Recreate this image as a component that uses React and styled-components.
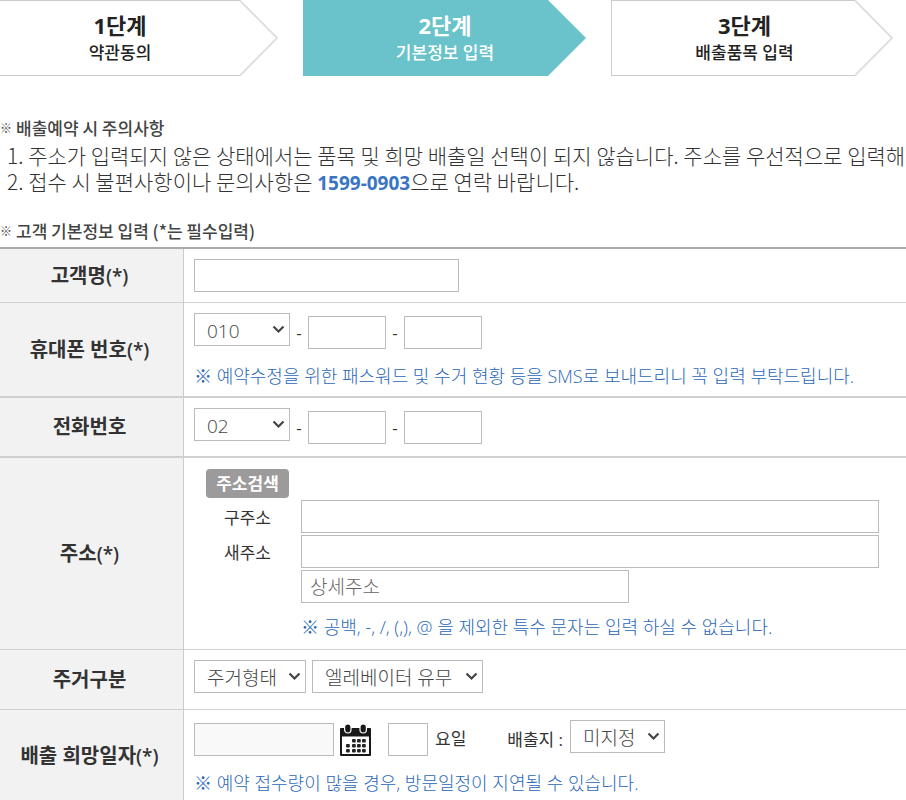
import React from "react";
import styled, { createGlobalStyle } from "styled-components";

const GlobalStyle = createGlobalStyle`
  *, *::before, *::after { box-sizing: border-box; }
  body {
    margin: 0;
    background: #fff;
    color: #333;
    font-family: "Open Sans", "Noto Sans CJK KR", sans-serif;
    font-size: 17px;
    line-height: 24px;
    overflow-x: hidden;
  }
  input, select, button { font-family: inherit; color: inherit; }
`;

const Page = styled.main`
  overflow: hidden;
`;

const Steps = styled.ol`
  display: grid;
  grid-template-columns: 278fr 283fr 282fr;
  gap: 25px;
  margin: 0;
  padding: 0 13px 0 0;
  list-style: none;
`;

const Step = styled.li`
  display: flex;
  height: 76px;
  color: ${(p) => (p.$active ? "#fff" : "#222")};
`;

const StepBody = styled.div`
  flex: 1;
  display: flex;
  flex-direction: column;
  align-items: center;
  justify-content: center;
  padding: 2px 0 0 ${(p) => p.$indent}px;
  white-space: nowrap;
  background: ${(p) => (p.$active ? "#6ac3ca" : "#fff")};
  border: 1px solid ${(p) => (p.$active ? "#6ac3ca" : "#ccc")};
  border-right: 0;
  ${(p) => p.$open && "border-left: 0;"}
`;

const StepTitle = styled.strong`
  font-size: 22px;
  line-height: 28px;
`;

const StepText = styled.span`
  font-size: 17px;
  font-weight: 500;
  line-height: 28px;
`;

const Tip = styled.svg`
  flex: none;
  display: block;
  width: 38px;
  height: 76px;
`;

const SectionTitle = styled.h2`
  display: flex;
  gap: 4px;
  margin: ${(p) => p.$top}px 0 0;
  font-family: "Noto Sans CJK KR", sans-serif;
  font-size: 17px;
  font-weight: 500;
  line-height: 24px;
  color: #444;
`;

const SmallMark = styled.span`
  font-size: 12px;
`;

const Notes = styled.ol`
  margin: 2px 0 0;
  padding: 0 0 0 7px;
  list-style: none;
  white-space: nowrap;
  font-family: "Noto Sans CJK KR", sans-serif;
  font-size: 21px;
  font-weight: 300;
  line-height: 26px;
  color: #333;
`;

const Phone = styled.strong`
  font-family: "Open Sans", sans-serif;
  font-size: 19px;
  font-weight: 700;
  line-height: 20px;
  color: #3a75c4;
`;

const Table = styled.table`
  width: 100%;
  margin-top: 4px;
  border-collapse: separate;
  border-spacing: 0;
  border-top: 2px solid #aaa;
`;

const Head = styled.th`
  width: 184px;
  padding: 0 4px 0 0;
  background: #f2f2f2;
  border-right: 1px solid #ccc;
  border-bottom: ${(p) => p.$line}px solid #d0d0d0;
  font-size: 20px;
  font-weight: 700;
  line-height: 28px;
  white-space: nowrap;
`;

const Mark = styled.span`
  font-size: 19px;
  font-weight: 600;
`;

const Cell = styled.td`
  padding: 10px 27px ${(p) => p.$bottom}px 10px;
  border-bottom: ${(p) => p.$line}px solid #d0d0d0;
  vertical-align: top;
`;

const Fields = styled.div`
  display: flex;
  align-items: flex-end;
  gap: 6px;
`;

const Input = styled.input`
  display: block;
  width: ${(p) => p.$width};
  height: 33px;
  padding: 0 8px;
  border: 1px solid #bbb;
  border-radius: 0;
  background: ${(p) => (p.readOnly ? "#f9f9f9" : "#fff")};
  font-size: 19px;
  font-weight: 300;
  &::placeholder { color: #666; opacity: 1; }
`;

const SelectBox = styled.span`
  position: relative;
  display: block;
  width: ${(p) => p.$width}px;
  margin-bottom: 3px;
  svg {
    position: absolute;
    right: 5px;
    top: 12px;
    width: 13px;
    height: 9px;
    pointer-events: none;
  }
`;

const Select = styled.select`
  display: block;
  width: 100%;
  height: 33px;
  padding: 2px 0 0 12px;
  border: 1px solid #bbb;
  border-radius: 0;
  background: #fff;
  appearance: none;
  font-size: 19px;
  font-weight: 300;
  color: #444;
`;

const Dash = styled.span`
  width: 6px;
  text-align: center;
  line-height: 33px;
`;

const Hint = styled.p`
  margin: 0;
  padding-top: ${(p) => p.$top}px;
  font-size: 18px;
  font-weight: 300;
  line-height: 24px;
  white-space: nowrap;
  color: #2a67b8;
`;

const Address = styled.div`
  display: grid;
  grid-template-columns: 83px 1fr;
  column-gap: 12px;
  padding: 1px 0 0 12px;
  label { text-align: center; line-height: 35px; }
`;

const SearchButton = styled.button`
  height: 29px;
  margin: 0 0 2px;
  padding: 0;
  border: 0;
  border-radius: 4px;
  background: #9c9a9a;
  color: #fff;
  font-size: 17px;
  font-weight: 700;
  line-height: 28px;
`;

const SecondColumn = styled.div`
  grid-column: 2;
`;

const DayGroup = styled.label`
  display: flex;
  gap: 7px;
  margin-left: 11px;
  line-height: 32px;
`;

const PlaceGroup = styled.label`
  display: flex;
  align-items: flex-end;
  gap: 7px;
  margin-left: 35px;
  line-height: 33px;
`;

const IconButton = styled.button`
  width: 31px;
  height: 32px;
  padding: 0;
  border: 0;
  background: none;
  svg { display: block; }
`;

function StepItem({ title, text, indent = 0, active, open }) {
  return (
    <Step $active={active} aria-current={active ? "step" : undefined}>
      <StepBody $active={active} $indent={indent} $open={open}>
        <StepTitle>{title}</StepTitle>
        <StepText>{text}</StepText>
      </StepBody>
      <Tip viewBox="0 0 38 76" aria-hidden="true">
        {active ? (
          <path d="M0 0 38 38 0 76Z" fill="#6ac3ca" />
        ) : (
          <path d="M0 .5 37 38 0 75.5" fill="none" stroke="#e0e0e0" strokeWidth="2" />
        )}
      </Tip>
    </Step>
  );
}

function DropDown({ width, options, label }) {
  return (
    <SelectBox $width={width}>
      <Select aria-label={label}>
        {options.map((o) => (
          <option key={o}>{o}</option>
        ))}
      </Select>
      <svg viewBox="0 0 13 9" aria-hidden="true">
        <path d="M1.5 1.5 6.5 6.5 11.5 1.5" fill="none" stroke="#444" strokeWidth="2.2" />
      </svg>
    </SelectBox>
  );
}

const DOT_ROWS = [
  { y: 15, columns: [11, 16, 21] },
  { y: 20, columns: [5, 11, 16, 21] },
  { y: 25, columns: [5, 11, 16, 21] },
];

function CalendarIcon() {
  return (
    <svg width="31" height="32" viewBox="0 0 31 32" aria-hidden="true">
      <rect x="0" y="4" width="31" height="28" rx="1" fill="#181818" />
      <rect x="2" y="12.5" width="27" height="17.5" fill="#fff" />
      <rect x="4.6" y="0" width="6.4" height="9" rx="3.2" fill="#181818" stroke="#fff" strokeWidth="1.2" />
      <rect x="20" y="0" width="6.4" height="9" rx="3.2" fill="#181818" stroke="#fff" strokeWidth="1.2" />
      {DOT_ROWS.map(({ y, columns }) =>
        columns.map((x) => (
          <rect key={`${x}-${y}`} x={x + 1} y={y} width="3.8" height="3.4" rx="1" fill="#222" />
        ))
      )}
    </svg>
  );
}

function PhoneFields({ name, options }) {
  return (
    <Fields>
      <DropDown width={96} options={options} label={`${name} 앞자리`} />
      <Dash>-</Dash>
      <Input $width="78px" aria-label={`${name} 가운데 자리`} />
      <Dash>-</Dash>
      <Input $width="78px" aria-label={`${name} 끝자리`} />
    </Fields>
  );
}

export default function App() {
  return (
    <Page>
      <GlobalStyle />
      <Steps>
        <StepItem title="1단계" text="약관동의" open />
        <StepItem title="2단계" text="기본정보 입력" indent={38} active />
        <StepItem title="3단계" text="배출품목 입력" indent={22} />
      </Steps>

      <SectionTitle $top={40}><SmallMark>※</SmallMark> 배출예약 시 주의사항</SectionTitle>
      <Notes>
        <li>1. 주소가 입력되지 않은 상태에서는 품목 및 희망 배출일 선택이 되지 않습니다. 주소를 우선적으로 입력해</li>
        <li>
          2. 접수 시 불편사항이나 문의사항은 <Phone>1599-0903</Phone>으로 연락 바랍니다.
        </li>
      </Notes>

      <SectionTitle $top={25}><SmallMark>※</SmallMark> 고객 기본정보 입력 (*는 필수입력)</SectionTitle>
      <Table>
        <tbody>
          <tr>
            <Head scope="row" $line={1}>
              <label htmlFor="name">고객명<Mark>(*)</Mark></label>
            </Head>
            <Cell $line={1} $bottom={10}>
              <Input id="name" $width="265px" />
            </Cell>
          </tr>
          <tr>
            <Head scope="row" $line={2}>휴대폰 번호<Mark>(*)</Mark></Head>
            <Cell $line={2} $bottom={8}>
              <PhoneFields name="휴대폰 번호" options={["010", "011", "016"]} />
              <Hint $top={15}>※ 예약수정을 위한 패스워드 및 수거 현황 등을 SMS로 보내드리니 꼭 입력 부탁드립니다.</Hint>
            </Cell>
          </tr>
          <tr>
            <Head scope="row" $line={2}>전화번호</Head>
            <Cell $line={2} $bottom={12}>
              <PhoneFields name="전화번호" options={["02", "031", "032"]} />
            </Cell>
          </tr>
          <tr>
            <Head scope="row" $line={1}>주소<Mark>(*)</Mark></Head>
            <Cell $line={1} $bottom={10}>
              <Address>
                <SearchButton type="button">주소검색</SearchButton>
                <span />
                <label htmlFor="old">구주소</label>
                <Input id="old" $width="100%" />
                <label htmlFor="new">새주소</label>
                <Input id="new" $width="100%" />
                <SecondColumn>
                  <Input $width="328px" placeholder="상세주소" aria-label="상세주소" />
                  <Hint $top={12}>※ 공백, -, /, (,), @ 을 제외한 특수 문자는 입력 하실 수 없습니다.</Hint>
                </SecondColumn>
              </Address>
            </Cell>
          </tr>
          <tr>
            <Head scope="row" $line={1}>주거구분</Head>
            <Cell $line={1} $bottom={13}>
              <Fields>
                <DropDown width={112} options={["주거형태"]} label="주거형태" />
                <DropDown width={171} options={["엘레베이터 유무"]} label="엘레베이터 유무" />
              </Fields>
            </Cell>
          </tr>
          <tr>
            <Head scope="row" $line={0}>배출 희망일자<Mark>(*)</Mark></Head>
            <Cell $line={0} $bottom={6}>
              <Fields>
                <Input $width="140px" readOnly aria-label="배출 희망일자" />
                <IconButton type="button" aria-label="달력">
                  <CalendarIcon />
                </IconButton>
                <DayGroup>
                  <Input $width="40px" />
                  요일
                </DayGroup>
                <PlaceGroup>
                  배출지 :
                  <DropDown width={95} options={["미지정"]} label="배출지" />
                </PlaceGroup>
              </Fields>
              <Hint $top={15}>※ 예약 접수량이 많을 경우, 방문일정이 지연될 수 있습니다.</Hint>
            </Cell>
          </tr>
        </tbody>
      </Table>
    </Page>
  );
}
